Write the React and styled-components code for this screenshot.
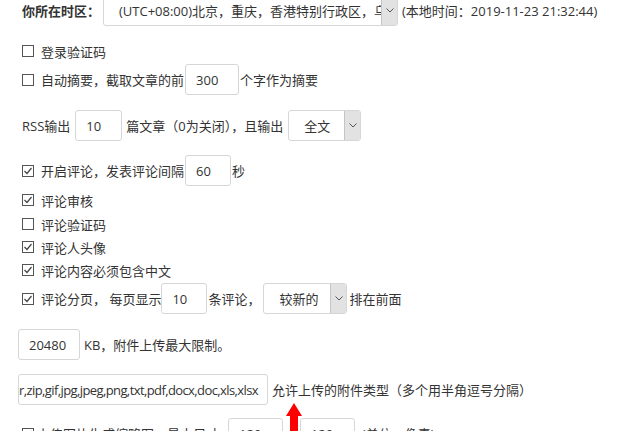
import React from "react";
import styled, { createGlobalStyle } from "styled-components";

const Global = createGlobalStyle`
  body {
    margin: 0;
    background: #fff;
    overflow: hidden;
  }
`;

const Page = styled.div`
  position: relative;
  width: 618px;
  height: 431px;
  overflow: hidden;
  padding-left: 22px;
  box-sizing: border-box;
  font-family: "Open Sans", "Noto Sans CJK SC", sans-serif;
  font-size: 13px;
  color: #333;
`;

const Stack = styled.div`
  display: flex;
  flex-direction: column;
  margin-top: -5px;
`;

const Row = styled.div`
  display: flex;
  align-items: center;
  height: ${(p) => p.$h || 20}px;
  margin-top: ${(p) => p.$gap || 0}px;
  margin-left: ${(p) => p.$shift || 0}px;
  white-space: nowrap;
`;

const Label = styled.span`
  font-weight: bold;
  width: 81px;
`;

const Text = styled.span`
  margin-left: ${(p) => p.$ml || 0}px;
`;

const Field = styled.div`
  box-sizing: border-box;
  width: ${(p) => p.$w}px;
  height: 31px;
  border: 1px solid #d6d6d6;
  border-radius: 3px;
  background: #fff;
  display: flex;
  align-items: center;
  justify-content: ${(p) => (p.$end ? "flex-end" : "flex-start")};
  padding: 0 ${(p) => (p.$end ? 9 : 0)}px 0 10px;
  margin: 0 ${(p) => p.$mr || 0}px 0 ${(p) => p.$ml || 0}px;
  letter-spacing: ${(p) => (p.$end ? "-0.6px" : "normal")};
  overflow: hidden;
  flex-shrink: 0;
`;

const SelectBox = styled.div`
  box-sizing: border-box;
  width: ${(p) => p.$w}px;
  height: 31px;
  border: 1px solid #d6d6d6;
  border-radius: 3px;
  background: #fff;
  display: flex;
  margin: 0 ${(p) => p.$mr || 0}px 0 ${(p) => p.$ml || 0}px;
  overflow: hidden;
  flex-shrink: 0;
`;

const SelectText = styled.div`
  flex: 1;
  display: flex;
  align-items: center;
  padding-left: ${(p) => p.$pl || 15}px;
  overflow: hidden;
  white-space: nowrap;
`;

const Arrow = styled.div`
  width: 15px;
  background: #e2e2e2;
  border-left: 1px solid #c4c4c4;
  display: flex;
  align-items: center;
  justify-content: center;
  flex-shrink: 0;
`;

const Box = styled.svg`
  flex-shrink: 0;
  margin-right: ${(p) => p.$mr || 7}px;
`;

const RedArrow = styled.svg`
  position: absolute;
  left: 285px;
  top: 403px;
`;

function Check({ on, mr }) {
  return (
    <Box width="12" height="12" viewBox="0 0 12 12" $mr={mr}>
      <rect x="0.5" y="0.5" width="11" height="11" fill="#fff" stroke="#555" />
      {on && (
        <polyline
          points="2.5,6 5,8.5 9.5,3"
          fill="none"
          stroke="#444"
          strokeWidth="1.2"
        />
      )}
    </Box>
  );
}

function Select({ w, text, ml, mr, pl }) {
  return (
    <SelectBox $w={w} $ml={ml} $mr={mr}>
      <SelectText $pl={pl}>{text}</SelectText>
      <Arrow>
        <svg width="8" height="5" viewBox="0 0 8 5">
          <polyline points="0.5,0.5 4,4 7.5,0.5" fill="none" stroke="#555" />
        </svg>
      </Arrow>
    </SelectBox>
  );
}

export default function App() {
  return (
    <Page>
      <Global />
      <Stack>
        <Row $h={31}>
          <Label>你所在时区：</Label>
          <Select
            w={295}
            text="(UTC+08:00)北京，重庆，香港特别行政区，乌鲁木齐"
          />
          <Text $ml={4}>(本地时间：2019-11-23 21:32:44)</Text>
        </Row>
        <Row $gap={15}>
          <Check />
          登录验证码
        </Row>
        <Row $h={31} $gap={3}>
          <Check />
          自动摘要，截取文章的前
          <Field $w={54} $ml={1} $mr={1}>300</Field>
          个字作为摘要
        </Row>
        <Row $h={31} $gap={15}>
          RSS输出
          <Field $w={47} $ml={5} $mr={4}>10</Field>
          篇文章（0为关闭），且输出
          <Select w={73} text="全文" ml={5} />
        </Row>
        <Row $h={31} $gap={14}>
          <Check on />
          开启评论，发表评论间隔
          <Field $w={46} $ml={1} $mr={1}>60</Field>
          秒
        </Row>
        <Row $gap={4}>
          <Check on />
          评论审核
        </Row>
        <Row $gap={4}>
          <Check />
          评论验证码
        </Row>
        <Row $gap={3}>
          <Check on />
          评论人头像
        </Row>
        <Row $gap={3}>
          <Check on />
          评论内容必须包含中文
        </Row>
        <Row $h={31} $gap={3}>
          <Check on />
          评论分页， 每页显示
          <Field $w={46} $ml={0} $mr={1}>10</Field>
          条评论，
          <Select w={84} text="较新的" ml={3} mr={2} />
          排在前面
        </Row>
        <Row $h={31} $gap={15} $shift={-4}>
          <Field $w={62} $mr={4}>20480</Field>
          KB，附件上传最大限制。
        </Row>
        <Row $h={31} $gap={14} $shift={-4}>
          <Field $w={250} $mr={4} $end>
            rar,zip,gif,jpg,jpeg,png,txt,pdf,docx,doc,xls,xlsx
          </Field>
          允许上传的附件类型（多个用半角逗号分隔）
        </Row>
        <Row $h={31} $gap={13}>
          <Check on mr={3} />
          上传图片生成缩略图，最大尺寸
          <Field $w={55} $ml={9} $mr={1}>120</Field>
          <Text $ml={4}>x</Text>
          <Field $w={55} $ml={5} $mr={7}>120</Field>
          (单位：像素)
        </Row>
      </Stack>
      <RedArrow width="18" height="30" viewBox="0 0 18 30">
        <polygon points="9,0 17,13 13,13 13,30 5,30 5,13 1,13" fill="#f00" />
      </RedArrow>
    </Page>
  );
}
